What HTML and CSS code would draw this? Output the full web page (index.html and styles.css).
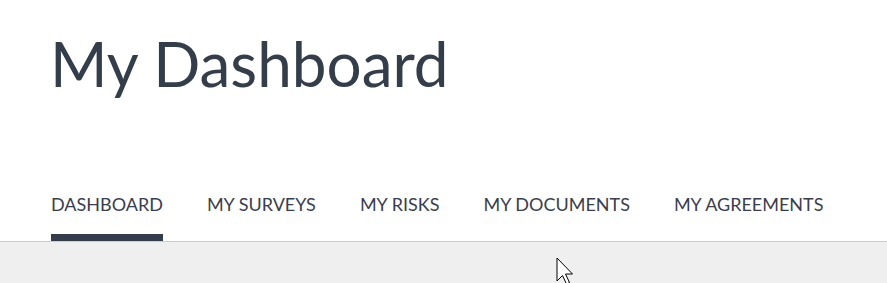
FILE: index.html
```html
<!DOCTYPE html>
<html lang="en">
<head>
    <meta charset="UTF-8">
    <title>My Dashboard</title>
    <link rel="stylesheet" href="styles.css">
</head>
<body>

<div class="header">
    <h1 class="title">My Dashboard</h1>
    <ul class="tabs">
        <li class="tab active">DASHBOARD</li>
        <li class="tab">MY SURVEYS</li>
        <li class="tab">MY RISKS</li>
        <li class="tab">MY DOCUMENTS</li>
        <li class="tab">MY AGREEMENTS</li>
    </ul>
</div>
<div class="content"></div>

<svg class="cursor" width="18" height="28" viewBox="0 0 18 28">
    <path d="M1 1 L1 24 L6.5 18.5 L10.5 27 L13.5 25.5 L9.5 17 L16.5 17 Z" fill="#fff" stroke="#000" stroke-width="1" stroke-linejoin="miter"/>
</svg>

</body>
</html>
```

FILE: styles.css
```css
body {
    margin: 0;
    font-family: Lato, "Open Sans", sans-serif;
    background-color: #efefef;
    color: #333e4a;
    overflow: hidden;
}
.header {
    background-color: #fff;
    border-bottom: 1px solid #cccccc;
    padding-left: 51px;
}
.title {
    margin: 0 0 0 -1px;
    padding-top: 23px;
    height: 180px;
    box-sizing: border-box;
    font-size: 62px;
    font-weight: 400;
    line-height: 80px;
}
.tabs {
    display: flex;
    list-style: none;
    margin: 0;
    padding: 0;
    gap: 44px;
}
.tab {
    font-size: 18px;
    line-height: 26px;
    padding-top: 11px;
    height: 61px;
    box-sizing: border-box;
    color: #3a3d4e;
    border-bottom: 7px solid transparent;
}
.tab.active {
    border-bottom-color: #333e4a;
}
.content {
    height: 42px;
}
.cursor {
    position: absolute;
    left: 556px;
    top: 257px;
}
```
